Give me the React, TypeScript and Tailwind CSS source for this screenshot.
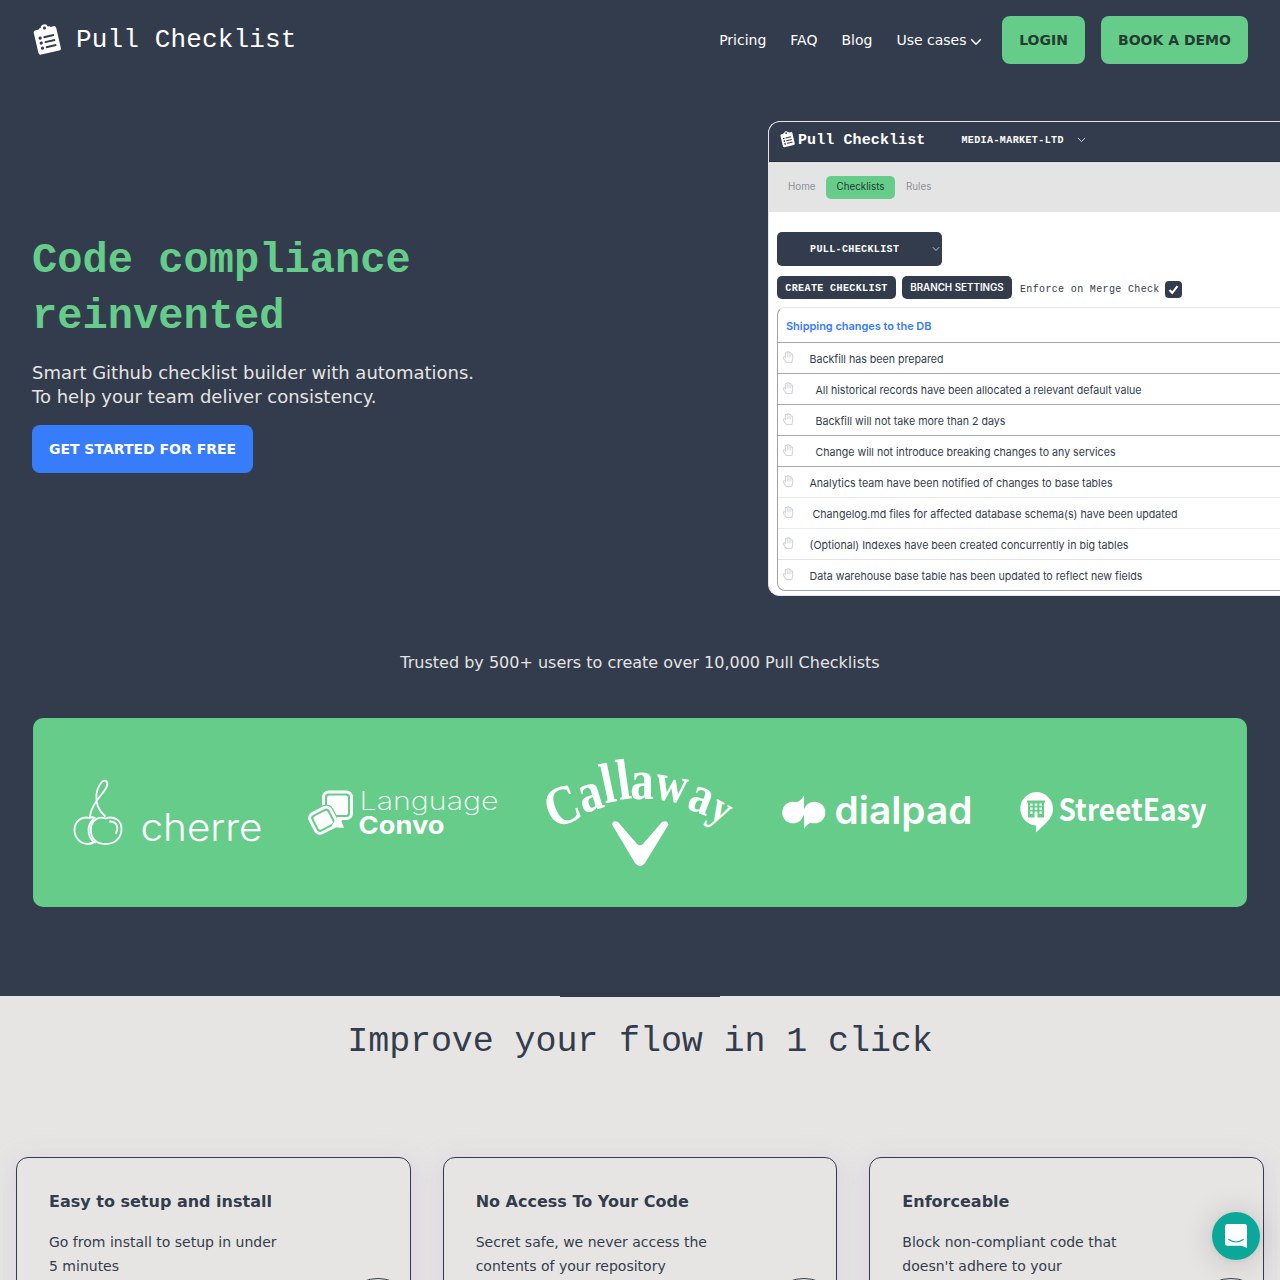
import React from 'react';
import { FaRegHandPaper } from 'react-icons/fa';

const MONO = "font-['Liberation_Mono',monospace]";

function Clipboard({ className }: { className: string }) {
  return (
    <svg viewBox="0 0 30 32" className={className}>
      <g transform="translate(0.3 6.8) rotate(-13)" fill="#fff">
        <rect x="0" y="0" width="23" height="25" rx="2.4" />
        <path d="M5.5 3.500 V0.500 Q5.500 -1 7 -1 H7.800 A3.800 3.800 0 0 1 15.200 -1 H16 Q17.500 -1 17.500 0.500 V3.500 Z" />
        <circle cx="11.500" cy="-0.200" r="1.500" fill="#333c4d" />
        <g fill="#333c4d">
          <circle cx="5" cy="8.700" r="1.600" />
          <circle cx="5" cy="13.700" r="1.600" />
          <circle cx="5" cy="19" r="1.600" />
          <rect x="8.500" y="7.700" width="10.800" height="1.900" rx="0.500" />
          <rect x="8.500" y="12.800" width="10.800" height="1.900" rx="0.500" />
          <rect x="8.500" y="18" width="10.800" height="1.900" rx="0.500" />
        </g>
      </g>
    </svg>
  );
}

function Chevron({ className }: { className: string }) {
  return (
    <svg viewBox="0 0 12 8" className={className} fill="none" stroke="currentColor">
      <path d="M1.2 1.2 L6 6.2 L10.8 1.2" />
    </svg>
  );
}

function Header() {
  return (
    <header className="flex h-20 items-center justify-between px-8">
      <div className="flex items-center">
        <Clipboard className="h-8 w-[30px] translate-x-px" />
        <span className="ml-[14px] font-['Liberation_Mono',monospace] text-[26px] leading-8 tracking-[0.14px] text-white">
          Pull Checklist
        </span>
      </div>
      <nav className="flex items-center text-sm text-white">
        <a className="mr-6">Pricing</a>
        <a className="mr-6">FAQ</a>
        <a className="mr-6">Blog</a>
        <a className="mr-5 flex items-center">
          Use cases
          <Chevron className="mt-[3px] ml-[3.5px] h-2 w-3 stroke-[1.6]" />
        </a>
        <button className="mr-4 h-12 w-[83px] rounded-lg bg-[#66cc8a] text-sm font-semibold text-[#223d30]">LOGIN</button>
        <button className="h-12 w-[147px] rounded-lg bg-[#66cc8a] text-sm font-semibold text-[#223d30]">BOOK A DEMO</button>
      </nav>
    </header>
  );
}

const ROWS = [
  { text: 'Backfill has been prepared', cls: 'ml-[14.5px]', w: 134, line: 'border-[#a4a8b1]' },
  { text: 'All historical records have been allocated a relevant default value', cls: 'ml-[20.5px]', w: 326, line: 'border-[#a4a8b1]' },
  { text: 'Backfill will not take more than 2 days', cls: 'ml-[20.5px]', w: 190, line: 'border-[#a4a8b1]' },
  { text: 'Change will not introduce breaking changes to any services', cls: 'ml-[20.5px]', w: 300, line: 'border-[#a4a8b1]' },
  { text: 'Analytics team have been notified of changes to base tables', cls: 'ml-[14.5px]', w: 303, line: 'border-[#ebebed]' },
  { text: 'Changelog.md files for affected database schema(s) have been updated', cls: 'ml-[17.5px]', w: 365, line: 'border-[#ebebed]' },
  { text: '(Optional) Indexes have been created concurrently in big tables', cls: 'ml-[14.5px]', w: 319, line: 'border-[#e2e2e5]' },
  { text: 'Data warehouse base table has been updated to reflect new fields', cls: 'ml-[14.5px]', w: 333, line: 'border-transparent' },
];

function Preview() {
  return (
    <div className="h-[475px] w-[512px] shrink-0 overflow-hidden rounded-l-xl border border-r-0 border-[#e5e5e5] bg-white font-['Inter',sans-serif] text-[#333c4d]">
      <div className="flex h-10 items-center border-b border-[#262c3a] bg-[#333c4d] pl-[11px] text-white">
        <Clipboard className="-mt-1 h-[17px] w-4" />
        <span className={`${MONO} -mt-px ml-[2px] text-[15px] font-bold tracking-[0.1px]`}>Pull Checklist</span>
        <span className={`${MONO} -mt-[3px] ml-9 text-[10px] font-bold tracking-[0.4px]`}>MEDIA-MARKET-LTD</span>
        <Chevron className="-mt-1 ml-[13px] h-[6px] w-[9px]" />
      </div>
      <div className="flex h-[50px] items-center bg-[#e4e4e4] pl-[19px] text-[9.8px] text-[#8e9097]">
        <span className="w-[38px]">Home</span>
        <span className="mr-[11px] flex h-[23px] w-[69px] items-center justify-center rounded-[5px] bg-[#66cc8a] text-[#223d30]">Checklists</span>
        <span>Rules</span>
      </div>
      <div className="pt-5 pl-2">
        <div className="flex h-[34px] w-[165px] items-center rounded-[5px] bg-[#333c4d] pl-[33px] text-white">
          <span className={`${MONO} text-[10px] font-bold tracking-[0.38px]`}>PULL-CHECKLIST</span>
          <Chevron className="ml-[33px] h-[6px] w-2" />
        </div>
        <div className="mt-[10px] flex h-[23px] items-center">
          <span className={`${MONO} flex h-[23px] w-[119px] items-center justify-center rounded-[5px] bg-[#333c4d] pt-0.5 text-[10px] font-bold tracking-[0.4px] text-white`}>CREATE CHECKLIST</span>
          <span className="ml-[6px] flex h-[23px] w-[110px] items-center justify-center rounded-[5px] bg-[#333c4d] pt-px text-[9.8px] font-semibold text-white">BRANCH SETTINGS</span>
          <span className={`${MONO} mt-[3px] ml-2 w-[145px] text-[10px] tracking-[0.35px] whitespace-nowrap`}>Enforce on Merge Check</span>
          <svg viewBox="0 0 17 17" className="mt-[3px] size-[17px]">
            <rect width="17" height="17" rx="4" fill="#333c4d" />
            <path d="M4.5 9 L7.2 11.8 L12.5 5.2" fill="none" stroke="#fff" strokeWidth="2.1" />
          </svg>
        </div>
        <div className="mt-2 h-[284px] rounded-l-lg border border-r-0 border-[#a0a3aa] border-t-[#e6e6e8]">
          <div className="flex h-[35px] items-center border-b border-[#a4a8b1] pt-0.5 pl-2 text-[11px] font-semibold tracking-[-0.04px] text-[#377cfb]">
            <span>Shipping changes to the DB</span>
          </div>
          {ROWS.map((row) => (
            <div key={row.text} className={`flex h-[31px] items-center border-b pl-[6px] ${row.line}`}>
              <FaRegHandPaper className="-mt-[3px] -ml-0.5 size-[12px] text-[#d3d6dc]" />
              <svg className={`h-4 shrink-0 overflow-visible ${row.cls}`} width={row.w} height="16">
                <text x="0.5" y="12.700" fill="#333c4d" fontSize="11" textLength={row.w} lengthAdjust="spacingAndGlyphs">{row.text}</text>
              </svg>
            </div>
          ))}
        </div>
      </div>
    </div>
  );
}

function Hero() {
  return (
    <section className="flex justify-between pt-[41px] pl-8">
      <div className="pt-28">
        <h1 className="font-['Liberation_Mono',monospace] text-[42px] leading-[56px] font-bold tracking-[0.05px] text-[#66cc8a]">
          Code compliance
          <br />
          reinvented
        </h1>
        <p className="mt-4 text-lg leading-6 text-[#e5e4e2]">
          Smart Github checklist builder with automations.
          <br />
          To help your team deliver consistency.
        </p>
        <button className="mt-4 h-12 w-[221px] rounded-lg bg-[#377cfb] text-sm font-semibold text-white">GET STARTED FOR FREE</button>
      </div>
      <Preview />
    </section>
  );
}

function CherreLogo() {
  return (
    <svg viewBox="60 750 210 120" className="h-[120px] w-[210px]" fill="none" stroke="#fff" strokeWidth="1.8" strokeLinecap="round">
      <path d="M90 816 C91 808 96 801 101 795 C107 788 109 783 106 781 C102 779 97 788 96.500 794 C95.500 803 99 811 105 816" />
      <path d="M95 818 Q92 816.500 89.500 818 C82 816 75 821 74.500 829 C74 838 81 844 88 844 Q92 844 95 841" />
      <path d="M93.500 819 Q88.500 824 88.500 830 Q88.500 839 95 842.500" />
      <path d="M105.500 818.500 C98 815.500 90.800 821 90.800 830 C90.800 839 97 844 105.500 844 C115 844 121.500 838 121.500 829 C121.500 820 114 815.500 105.500 818.500 Z" />
      <path d="M110 821.500 C117 821.500 119 828 116 833" />
      <text x="140.5" y="840.5" textLength="122" lengthAdjust="spacingAndGlyphs" fill="#fff" stroke="none" fontFamily="Inter" fontWeight="300" fontSize="38.500">cherre</text>
    </svg>
  );
}

function ConvoLogo() {
  return (
    <svg viewBox="300 750 210 120" className="h-[120px] w-[210px]" fill="none">
      <rect x="323.500" y="792" width="28" height="26.500" rx="5" stroke="#fff" strokeWidth="3" />
      <rect x="327" y="795.500" width="21" height="19.500" rx="2.500" fill="#fff" />
      <g transform="rotate(-27 323 820)">
        <rect x="311.500" y="809.500" width="23" height="21.500" rx="5" fill="#66cc8a" stroke="#66cc8a" strokeWidth="5.500" />
        <rect x="311.500" y="809.500" width="23" height="21.500" rx="5" fill="#66cc8a" stroke="#fff" strokeWidth="3" />
        <rect x="315" y="813" width="16" height="14.500" rx="2" fill="#fff" />
      </g>
      <path d="M337 817 H343.500 L341.500 821.500 L344 828 L331 827 Z" fill="#fff" />
      <text x="359.500" y="809.500" textLength="139" lengthAdjust="spacingAndGlyphs" fill="#fff" fontFamily="Inter" fontWeight="200" fontSize="25.500">Language</text>
      <text x="358.500" y="833.500" textLength="86" lengthAdjust="spacingAndGlyphs" fill="#fff" fontFamily="Inter" fontWeight="700" fontSize="24.500">Convo</text>
    </svg>
  );
}

const CALLAWAY = [
  { c: 'C', x: 569, y: 823, r: -22, s: 56 },
  { c: 'a', x: 594.5, y: 810, r: -17, s: 56 },
  { c: 'l', x: 611.5, y: 802, r: -12, s: 57 },
  { c: 'l', x: 626, y: 799, r: -8, s: 58 },
  { c: 'a', x: 642, y: 799, r: 0, s: 56 },
  { c: 'w', x: 669, y: 801, r: 10, s: 53 },
  { c: 'a', x: 696, y: 812, r: 21, s: 54 },
  { c: 'y', x: 715, y: 821, r: 29, s: 44 },
];

function CallawayLogo() {
  return (
    <svg viewBox="535 745 210 130" className="h-[130px] w-[210px]" fill="#fff">
      {CALLAWAY.map((l, i) => (
        <text key={i} transform={`translate(${l.x} ${l.y}) rotate(${l.r}) scale(0.84 1)`} textAnchor="middle" fontFamily="Liberation Serif" fontWeight="700" fontSize={l.s}>
          {l.c}
        </text>
      ))}
      <path d="M612 824.500 Q613 819.500 618 822 L637 844 Q640 846.500 643 844 L662 822 Q667 819.500 668.500 824.500 L645 863 Q640 869.500 635 863 Z" />
    </svg>
  );
}

function DialpadLogo() {
  return (
    <svg viewBox="770 750 210 120" className="h-[120px] w-[210px]" fill="#fff">
      <circle cx="793" cy="812.500" r="10.800" />
      <path d="M796 802.500 Q801 801 804 795.500 V815 L796 818 Z" />
      <circle cx="814.500" cy="812.500" r="10.800" />
      <path d="M804 808 L811 822.500 Q807 824 804 829 Z" />
      <text x="834.500" y="823.500" textLength="138" lengthAdjust="spacingAndGlyphs" fontFamily="Inter" fontWeight="600" fontSize="38.500">dialpad</text>
    </svg>
  );
}

function StreetEasyLogo() {
  return (
    <svg viewBox="1010 750 210 120" className="h-[120px] w-[210px]" fill="#fff">
      <path d="M1036 792 A17 17 0 0 1 1053 809 C1053 818 1045 824 1036 832.500 V825.500 A17 16.800 0 0 1 1036 792 Z" />
      <path d="M1027 800.500 H1045 V802.500 H1044 V817.500 H1037.500 V813.500 H1034.500 V817.500 H1028 V802.500 H1027 Z" fill="#66cc8a" />
      {[1030, 1034.7, 1039.4].map((x) =>
        [803.5, 807.5, 811.5].map((y) => <rect key={`${x}-${y}`} x={x} y={y} width="2.6" height="2.3" />)
      )}
      <text x="1058.500" y="821" textLength="148" lengthAdjust="spacingAndGlyphs" fontFamily="Noto Sans CJK SC" fontWeight="700" fontSize="31">StreetEasy</text>
    </svg>
  );
}

const CARDS = [
  { title: 'Easy to setup and install', lines: ['Go from install to setup in under', '5 minutes'] },
  { title: 'No Access To Your Code', lines: ['Secret safe, we never access the', 'contents of your repository'] },
  { title: 'Enforceable', lines: ['Block non-compliant code that', "doesn't adhere to your"] },
];

export default function App() {
  return (
    <div className="relative h-[1280px] w-[1280px] overflow-hidden bg-[#e6e5e3] font-['DejaVu_Sans',sans-serif]">
      <div className="h-[996px] bg-[#333c4d]">
        <Header />
        <Hero />
        <p className="mt-[55px] text-center text-base leading-6 text-[#e5e4e2]">Trusted by 500+ users to create over 10,000 Pull Checklists</p>
        <div className="mx-[33px] mt-[43px] flex h-[189px] items-center rounded-[10px] bg-[#66cc8a] pb-[5px] pl-[27px]">
          <CherreLogo />
          <div className="mr-[25px] ml-[30px]"><ConvoLogo /></div>
          <CallawayLogo />
          <div className="mr-[30px] ml-[25px]"><DialpadLogo /></div>
          <StreetEasyLogo />
        </div>
      </div>
      <div className="mx-auto h-px w-40 bg-[#333c4d]" />
      <h2 className="mt-[21px] text-center font-['Liberation_Mono',monospace] text-[35px] leading-[48px] tracking-[-0.1px] text-[#333c4d]">
        Improve your flow in 1 click
      </h2>
      <div className="mt-[91px] grid grid-cols-3 gap-8 px-4 text-[#333c4d]">
        {CARDS.map((card) => (
          <div key={card.title} className="relative h-[240px] rounded-xl border border-[#333c4d] bg-[#e6e5e3] px-8 pt-8 shadow-[0_4px_24px_rgba(200,170,225,0.38)]">
            <h3 className="text-base leading-6 font-bold">{card.title}</h3>
            <p className="mt-4 text-sm leading-6">
              {card.lines[0]}
              <br />
              {card.lines[1]}
            </p>
            <div className="absolute top-[120px] right-[-8px] size-20 rounded-full border border-[#333c4d]" />
          </div>
        ))}
      </div>
      <div className="absolute top-[1212px] left-[1212px] flex size-12 items-center justify-center rounded-full bg-[#0ba89a] shadow-[0_1px_6px_rgba(0,0,0,0.06),0_2px_32px_rgba(0,0,0,0.16)]">
        <svg viewBox="0 0 22 24" className="h-6 w-[22px]">
          <path d="M2.500 0 H19.500 Q22 0 22 2.500 V24 L16.500 21.800 H2.500 Q0 21.800 0 19.300 V2.500 Q0 0 2.500 0 Z" fill="#fff" />
          <path d="M3.800 15.500 Q11 20.500 18.200 15.500" fill="none" stroke="#0ba89a" strokeWidth="1.200" strokeLinecap="round" />
        </svg>
      </div>
    </div>
  );
}
